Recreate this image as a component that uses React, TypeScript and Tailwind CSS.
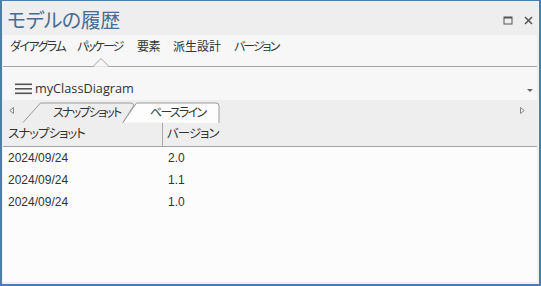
import React from "react";

const JP = "[font-family:'Open_Sans','Noto_Sans_CJK_JP',sans-serif] [font-feature-settings:'palt']";

function Hamburger() {
  return (
    <svg width="18" height="12" viewBox="0 0 18 12" className="mr-[2px]">
      <rect x="0" y="0.5" width="17" height="1.6" fill="#555" />
      <rect x="0" y="5" width="17" height="1.6" fill="#555" />
      <rect x="0" y="9.5" width="17" height="1.6" fill="#555" />
    </svg>
  );
}

export default function App() {
  const tabs = [
    { t: "ダイアグラム", w: "w-[67px] tracking-[-1.5px]" },
    { t: "パッケージ", w: "w-[60px] tracking-[-2px]" },
    { t: "要素", w: "w-[36px] tracking-[-0.5px]" },
    { t: "派生設計", w: "w-[61px]" },
    { t: "バージョン", w: "w-auto tracking-[-2px]" },
  ];
  const rows = [
    ["2024/09/24", "2.0"],
    ["2024/09/24", "1.1"],
    ["2024/09/24", "1.0"],
  ];
  return (
    <div className={`w-[541px] h-[286px] border-t border-l-2 border-r-2 border-b-2 border-[#4f7cae] bg-[#eeeeee] flex flex-col ${JP}`}>
      {/* title bar */}
      <div className="h-[34px] shrink-0 flex items-start justify-between">
        <div className="pt-[6px] pl-[5px] text-[20px] leading-[28px] text-[#476d94] tracking-[-0.5px]">モデルの履歴</div>
        <div className="flex items-center gap-[11px] pt-[15px] pr-[6px]">
          <svg width="10" height="9" viewBox="0 0 10 9">
            <rect x="1" y="1" width="8" height="7" fill="none" stroke="#555" strokeWidth="1" />
            <rect x="1" y="1" width="8" height="1.5" fill="#555" />
          </svg>
          <svg width="9" height="9" viewBox="0 0 9 9">
            <path d="M1 1 L8 8 M8 1 L1 8" stroke="#555" strokeWidth="1.5" />
          </svg>
        </div>
      </div>
      {/* inner panel */}
      <div className="flex-1 ml-[1px] mr-[2px] mb-[2px] bg-[#fcfcfc] flex flex-col">
        {/* tab row */}
        <div className="relative h-[32px] shrink-0 bg-[#f7f7f7] border-b border-[#a3a3a3] flex items-start pt-[1px] pl-[7px] text-[12px] leading-[22px] text-[#333]">
          {tabs.map((x) => (
            <div key={x.t} className={`${x.w} whitespace-nowrap`}>{x.t}</div>
          ))}
          <svg className="absolute left-[89px] top-[22px]" width="18" height="10" viewBox="0 0 18 10">
            <path d="M0 9.5 L1 9.5 L9 1.5 L17 9.5 L18 9.5" fill="#f7f7f7" stroke="#a3a3a3" strokeWidth="1" />
            <rect x="2" y="9.5" width="14" height="1" fill="#f7f7f7" />
          </svg>
        </div>
        {/* diagram selector */}
        <div className="h-[33px] shrink-0 bg-[#f7f7f7] flex flex-col justify-end">
          <div className="h-[22px] flex items-center pl-[12px] pr-[4px]">
            <Hamburger />
            <span className="text-[12.7px] text-[#333] [font-family:'Open_Sans',sans-serif]">myClassDiagram</span>
            <div className="flex-1" />
            <svg width="6" height="4" viewBox="0 0 6 4" className="mt-[3px]">
              <path d="M0 0 L6 0 L3 3 Z" fill="#666" />
            </svg>
          </div>
        </div>
        {/* tab strip */}
        <div className="relative h-[23px] shrink-0 bg-[#eeeeee] flex items-center">
          <svg className="absolute left-0 top-0" width="240" height="23" viewBox="0 0 240 23">
            <path d="M20 22.5 L37.5 3 L128 3 Q130 3 131 5 L120 22.5" fill="#eeeeee" stroke="#9a9a9a" strokeWidth="1" />
            <path d="M120 22.5 L133.5 3 L213 3 Q216 3 216 6 L216 23" fill="#fdfdfd" stroke="#9a9a9a" strokeWidth="1" />
          </svg>
          <svg className="absolute left-[6px] top-[7px]" width="5" height="7" viewBox="0 0 5 7">
            <path d="M4.5 0.5 L0.8 3.5 L4.5 6.5 Z" fill="none" stroke="#888" strokeWidth="1" />
          </svg>
          <svg className="absolute left-[517px] top-[7px]" width="5" height="7" viewBox="0 0 5 7">
            <path d="M0.5 0.5 L4.2 3.5 L0.5 6.5 Z" fill="none" stroke="#888" strokeWidth="1" />
          </svg>
          <div className="relative flex text-[12px] text-[#333] pt-[3px] tracking-[-1.75px]">
            <div className="w-[147px] pl-[50px] whitespace-nowrap">スナップショット</div>
            <div className="whitespace-nowrap">ベースライン</div>
          </div>
        </div>
        {/* table header */}
        <div className="h-[24px] shrink-0 bg-[#eeeeee] border-b border-[#a3a3a3] flex text-[12.5px] text-[#333] tracking-[-1px]">
          <div className="w-[160px] pl-[5px] flex items-center border-r border-[#a8a8a8]">スナップショット</div>
          <div className="pl-[4px] flex items-center">バージョン</div>
        </div>
        {/* rows */}
        <div className="flex-1 bg-[#fcfcfc] text-[12px] text-[#333] [font-family:'Liberation_Sans',sans-serif]">
          {rows.map((r, i) => (
            <div key={i} className="h-[22px] flex items-center">
              <div className="w-[161px] pl-[5px]">{r[0]}</div>
              <div className="pl-[4px]">{r[1]}</div>
            </div>
          ))}
        </div>
      </div>
    </div>
  );
}
